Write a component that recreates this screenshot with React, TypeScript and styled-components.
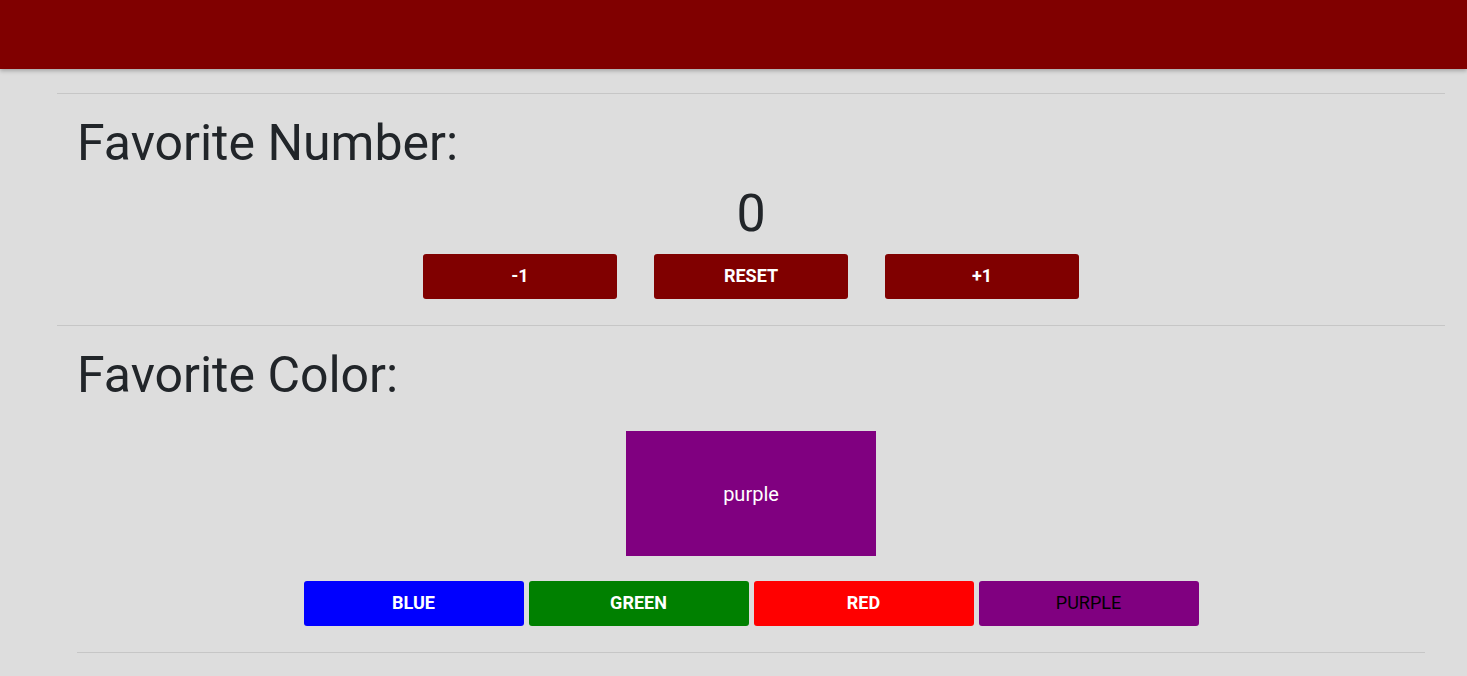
import React, { useState } from "react";
import styled, { createGlobalStyle } from "styled-components";

const Global = createGlobalStyle`
  html, body {
    margin: 0;
    padding: 0;
    background: #dddddd;
    font-family: Roboto, "Liberation Sans", Arial, sans-serif;
    color: #212529;
  }
  * { box-sizing: border-box; }
`;

const Header = styled.header`
  height: 69px;
  background: #800000;
  box-shadow: 0 2px 4px rgba(0, 0, 0, 0.25);
  position: relative;
  z-index: 1;
`;

const Main = styled.main`
  margin: 0 22px 0 57px;
  padding-top: 24px;
`;

const Rule = styled.hr<{ $inset?: boolean }>`
  margin: 0 ${(p) => (p.$inset ? "20px" : "0")};
  border: 0;
  border-top: 1px solid rgba(0, 0, 0, 0.1);
  height: 0;
`;

const Section = styled.section`
  padding: 19px 0 26px;
`;

const Title = styled.h1`
  margin: 0;
  padding-left: 20px;
  font-size: 50px;
  font-weight: 400;
  line-height: 60px;
`;

const Count = styled.div`
  margin-top: 10px;
  text-align: center;
  font-size: 52px;
  font-weight: 400;
  line-height: 62px;
`;

const Row = styled.div<{ $gap: number; $top: number }>`
  display: flex;
  justify-content: center;
  gap: ${(p) => p.$gap}px;
  margin-top: ${(p) => p.$top}px;
`;

const Btn = styled.button<{ $bg: string; $fg?: string; $w: number; $weight?: number }>`
  width: ${(p) => p.$w}px;
  height: 45px;
  border: 0;
  border-radius: 3px;
  background: ${(p) => p.$bg};
  color: ${(p) => p.$fg || "#ffffff"};
  font-family: Roboto, "Liberation Sans", Arial, sans-serif;
  font-size: 18px;
  line-height: 20px;
  font-weight: ${(p) => p.$weight ?? 700};
  text-transform: uppercase;
  cursor: pointer;
  padding: 0 0 2px;
`;

const Swatch = styled.div<{ $bg: string }>`
  width: 250px;
  height: 125px;
  margin: 26px auto 0;
  background: ${(p) => p.$bg};
  color: #ffffff;
  display: flex;
  align-items: center;
  justify-content: center;
  font-size: 20px;
`;

const COLORS = ["blue", "green", "red", "purple"];

export default function App() {
  const [n, setN] = useState(0);
  const [color, setColor] = useState("purple");
  return (
    <>
      <Global />
      <Header />
      <Main>
        <Rule />
        <Section>
          <Title>Favorite Number:</Title>
          <Count>{n}</Count>
          <Row $gap={37} $top={9}>
            <Btn $bg="#800000" $w={194} onClick={() => setN(n - 1)}>-1</Btn>
            <Btn $bg="#800000" $w={194} onClick={() => setN(0)}>Reset</Btn>
            <Btn $bg="#800000" $w={194} onClick={() => setN(n + 1)}>+1</Btn>
          </Row>
        </Section>
        <Rule />
        <Section>
          <Title>Favorite Color:</Title>
          <Swatch $bg={color}>{color}</Swatch>
          <Row $gap={5} $top={25}>
            {COLORS.map((c) => (
              <Btn
                key={c}
                $bg={c}
                $w={220}
                $fg={c === color ? "#000000" : "#ffffff"}
                $weight={c === color ? 400 : 700}
                onClick={() => setColor(c)}
              >
                {c}
              </Btn>
            ))}
          </Row>
        </Section>
        <Rule $inset />
      </Main>
    </>
  );
}
